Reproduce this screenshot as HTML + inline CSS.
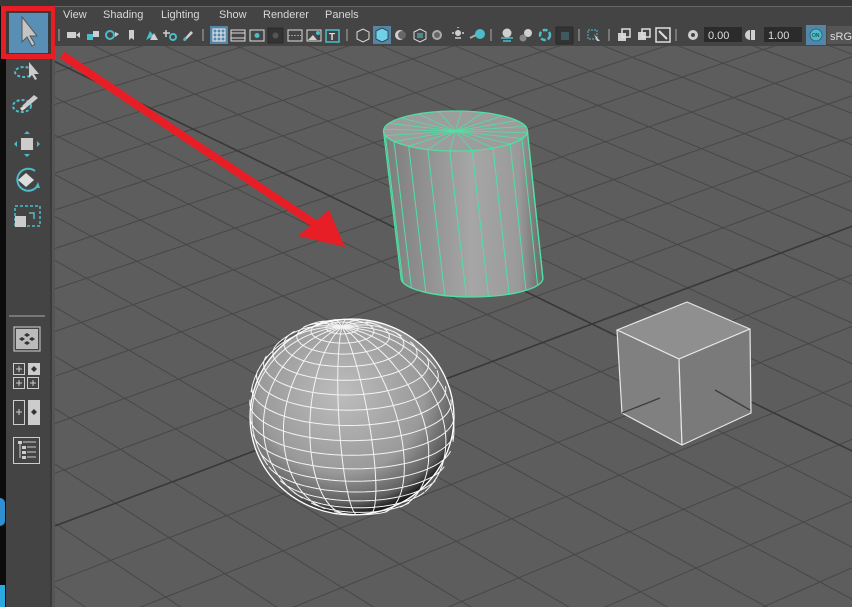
<!DOCTYPE html>
<html><head><meta charset="utf-8"><style>
*{margin:0;padding:0;box-sizing:border-box}
html{width:852px;height:607px;overflow:hidden}
body{width:852px;height:607px;overflow:hidden;background:#444;font-family:"Liberation Sans",sans-serif;position:relative}
.abs{position:absolute}
svg{display:block}
.menu span{position:absolute;top:9px;font-size:11px;color:#d8d8d8}
</style></head><body>
<div class="abs" style="left:0;top:0;width:6px;height:607px;background:#0c0c0c"></div>
<div class="abs" style="left:0;top:498px;width:5px;height:28px;background:#2f8fd0;border-radius:0 6px 6px 0"></div>
<div class="abs" style="left:0;top:585px;width:5px;height:22px;background:#2aa8e0"></div>
<div class="abs" style="left:6px;top:0;width:44px;height:607px;background:#444"></div>
<div class="abs" style="left:50px;top:0;width:2px;height:607px;background:#3a3a3a"></div>
<div class="abs" style="left:52px;top:18px;width:3px;height:589px;background:#555"></div>
<div class="abs" style="left:0;top:0;width:852px;height:6px;background:#393939"></div>
<div class="abs" style="left:55px;top:6px;width:797px;height:1px;background:#666"></div>
<div class="abs" style="left:55px;top:7px;width:797px;height:39px;background:#444"></div>

<div class="menu">
<span style="left:63px">View</span><span style="left:103px">Shading</span><span style="left:161px">Lighting</span><span style="left:219px">Show</span><span style="left:263px">Renderer</span><span style="left:325px">Panels</span>
</div>

<svg class="abs" style="left:0;top:0" width="852" height="46">
<g fill="#cfcfcf" stroke="none">
<rect x="58" y="29" width="2" height="12" fill="#777"/>
<rect x="67" y="32" width="9" height="6"/><path d="M76 35l4-3v6z"/>
<rect x="87" y="34" width="6" height="6" fill="#4bbcc8"/><rect x="93" y="31" width="6" height="6"/>
<circle cx="110" cy="35" r="4" fill="none" stroke="#4bbcc8" stroke-width="2"/><path d="M115 32l4 2-4 3z"/>
<path d="M129 30h5v10l-2.5-2-2.5 2z"/>
<path d="M146 40l4-9 4 5-8 4z" fill="#4bbcc8"/><path d="M150 40h8l-4-7z"/>
<circle cx="173" cy="37" r="3" fill="none" stroke="#4bbcc8" stroke-width="2"/><path d="M163 33h7M166 30v7" stroke="#cfcfcf" stroke-width="1.5"/>
<path d="M183 40l8-9 2 2-8 8z"/><circle cx="185" cy="39" r="1.5" fill="#4bbcc8"/>
<rect x="202" y="29" width="2" height="12" fill="#777"/>
<rect x="210" y="26" width="18" height="18" fill="#5586a8"/>
<rect x="213" y="29" width="12" height="12" fill="none" stroke="#eee" stroke-width="1"/><path d="M217 29v12M221 29v12M213 33h12M213 37h12" stroke="#eee" stroke-width="1"/>
<rect x="231" y="30" width="14" height="11" fill="none" stroke="#ddd"/><path d="M231 33h14M231 38h14" stroke="#ddd"/>
<rect x="250" y="30" width="14" height="11" fill="none" stroke="#ddd"/><circle cx="257" cy="35.5" r="2.5" fill="#4bbcc8"/>
<rect x="268" y="28" width="15" height="15" fill="#333" stroke="#2a2a2a"/><circle cx="275.5" cy="35.5" r="3" fill="#555"/>
<rect x="288" y="30" width="14" height="11" fill="none" stroke="#ddd"/><path d="M288 35.5h14" stroke="#4bbcc8" stroke-dasharray="2 1"/>
<rect x="307" y="30" width="14" height="11" fill="none" stroke="#ddd"/><path d="M308 40l5-5 4 5z"/><circle cx="318" cy="33" r="2" fill="#4bbcc8"/>
<rect x="326" y="30" width="13" height="12" fill="none" stroke="#4bbcc8" stroke-width="1.5"/><text x="329" y="40" font-size="10" font-weight="bold" fill="#ddd" font-family="Liberation Sans">T</text>
<rect x="346" y="29" width="2" height="12" fill="#777"/>
<path d="M357 32l6-3 6 3v7l-6 3-6-3z" fill="none" stroke="#ddd"/>
<rect x="373" y="26" width="18" height="18" fill="#5586a8"/><path d="M376 31l6-3 6 3v8l-6 3-6-3z" fill="#6fd0e8" stroke="#333" stroke-width=".8"/>
<circle cx="400" cy="35" r="5"/><circle cx="402" cy="35" r="4" fill="#666"/>
<path d="M414 32l6-3 6 3v7l-6 3-6-3z" fill="none" stroke="#ddd"/><path d="M417 33h6v5h-6z" fill="#4bbcc8" opacity=".6"/>
<circle cx="437" cy="35" r="5" fill="#aaa"/><circle cx="437" cy="35" r="3" fill="#666"/>
<circle cx="458" cy="33" r="3"/><path d="M452 33h2M462 33h2M458 28v-1M455 38h6" stroke="#cfcfcf" stroke-width="1.5"/>
<circle cx="480" cy="34" r="5" fill="#4bbcc8"/><path d="M470 38l6-3" stroke="#aaa" stroke-width="2"/>
<rect x="490" y="29" width="2" height="12" fill="#777"/>
<circle cx="507" cy="33" r="4.5"/><path d="M501 38h12M503 41h8" stroke="#4bbcc8" stroke-width="1.5"/>
<circle cx="528" cy="33" r="4"/><circle cx="523" cy="38" r="3.5" fill="#888"/>
<circle cx="545" cy="35" r="5" fill="none" stroke="#4bbcc8" stroke-width="2.5" stroke-dasharray="5 2"/>
<rect x="556" y="27" width="17" height="17" fill="#333" stroke="#2a2a2a"/><rect x="561" y="32" width="8" height="8" fill="#3f5a5f"/>
<rect x="578" y="29" width="2" height="12" fill="#777"/>
<rect x="588" y="30" width="9" height="9" fill="none" stroke="#4bbcc8" stroke-dasharray="2 1"/><path d="M594 34l6 7-3 0z"/>
<rect x="608" y="29" width="2" height="12" fill="#777"/>
<rect x="618" y="33" width="8" height="8"/><rect x="622" y="29" width="8" height="8" fill="none" stroke="#ddd" stroke-width="1.5"/>
<rect x="638" y="32" width="8" height="8"/><rect x="642" y="29" width="8" height="8" fill="none" stroke="#ddd" stroke-width="1.5"/>
<rect x="656" y="28" width="14" height="14" fill="none" stroke="#ddd" stroke-width="1.5"/><path d="M659 31l8 8" stroke="#ddd" stroke-width="2"/>
<rect x="675" y="29" width="2" height="12" fill="#777"/>
<circle cx="693" cy="35" r="5"/><circle cx="693" cy="35" r="2" fill="#444"/>
<rect x="704" y="27" width="38" height="15" fill="#2b2b2b"/>
<path d="M750 30a5 5 0 0 0 0 10z" /><rect x="751" y="30" width="4" height="10"/>
<rect x="764" y="27" width="38" height="15" fill="#2b2b2b"/>
<rect x="806" y="25" width="20" height="20" fill="#5586a8"/><circle cx="816" cy="35" r="6" fill="#4bbcc8" stroke="#2a6a80"/>
<rect x="827" y="26" width="25" height="18" fill="#555"/>
</g>
<text x="708" y="39" font-size="11" fill="#ddd" font-family="Liberation Sans">0.00</text>
<text x="768" y="39" font-size="11" fill="#ddd" font-family="Liberation Sans">1.00</text>
<text x="812" y="37" font-size="5" fill="#123" font-family="Liberation Sans">ON</text>
<text x="830" y="40" font-size="11" fill="#ddd" font-family="Liberation Sans">sRGB</text>
</svg>

<svg id="vp" class="abs" style="left:55px;top:46px" width="797" height="561" viewBox="55 46 797 561">
<defs>
<radialGradient id="sg" cx="0.45" cy="0.38" r="0.62">
<stop offset="0" stop-color="#bdbdbd"/><stop offset="0.65" stop-color="#9a9a9a"/><stop offset="0.9" stop-color="#606060"/><stop offset="1" stop-color="#1a1a1a"/>
</radialGradient>
<linearGradient id="cg" x1="0" x2="1" y1="0" y2="0">
<stop offset="0" stop-color="#7d7d7d"/><stop offset="0.55" stop-color="#a6a6a6"/><stop offset="0.85" stop-color="#9a9a9a"/><stop offset="1" stop-color="#6a6a6a"/>
</linearGradient>
</defs>
<rect x="55" y="46" width="797" height="561" fill="#5d5d5d"/>
<g id="grid"></g>
<g stroke="#e6e6e6" stroke-width="1.2" stroke-linejoin="round">
<polygon points="617,330 687,302 750,329 679,359" fill="#8f8f8f"/>
<polygon points="617,330 679,359 682,445 622,413" fill="#808080"/>
<polygon points="679,359 750,329 751,413 682,445" fill="#7a7a7a"/>
<path d="M622,413 L 660,398 M 715,390 L 750,410" stroke="#3e3e3e" stroke-width="1.3"/>
</g>
<g id="cyl"></g>
<g id="sph"></g>
<path d="M62,55 L318,226" stroke="#e81e26" stroke-width="8" stroke-linecap="butt"/>
<polygon points="345,247 298,236 329,210" fill="#e81e26"/>
</svg>

<svg class="abs" style="left:0;top:0" width="55" height="607">
<rect x="6" y="10" width="44" height="46" fill="#3a3a3a"/>
<rect x="9" y="13" width="39" height="40" fill="#5a8fb5"/>
<path d="M22 17v25l5-5 5 9 3-2-5-8h7z" fill="#c4c4c4" stroke="#555" stroke-width="1"/>
<rect x="3.5" y="8.5" width="50" height="48" fill="none" stroke="#e81e26" stroke-width="5"/>
<ellipse cx="24" cy="72" rx="9" ry="5" fill="none" stroke="#4bbcc8" stroke-width="2" stroke-dasharray="3 2"/>
<path d="M29 62v16l3-3 3 5 2-1-3-5h5z" fill="#ccc"/>
<ellipse cx="22" cy="106" rx="9" ry="6" fill="none" stroke="#4bbcc8" stroke-width="2" stroke-dasharray="3 2"/>
<path d="M22 106l12-11 4 3-12 10z" fill="#ccc"/><path d="M20 108l4-2 2 2-4 3z" fill="#ddd"/>
<rect x="21" y="138" width="12" height="12" fill="#ccc"/>
<path d="M27 131l3 3h-6zM27 157l3-3h-6zM14 144l3-3v6zM40 144l-3-3v6z" fill="#4bbcc8"/>
<path d="M35 171a11 11 0 1 0 3 14" fill="none" stroke="#4bbcc8" stroke-width="2"/>
<path d="M38 182l-3 6 5 0z" fill="#4bbcc8"/>
<path d="M26 173l8 7-8 7-8-7z" fill="#ddd"/>
<rect x="15" y="206" width="25" height="20" fill="none" stroke="#4bbcc8" stroke-width="1.5" stroke-dasharray="3 2"/>
<rect x="15" y="216" width="11" height="11" fill="#ccc"/>
<path d="M29 213h5v6" fill="none" stroke="#4bbcc8" stroke-width="1.5"/>
<rect x="9" y="315" width="36" height="2" fill="#777"/>
<rect x="14" y="327" width="26" height="24" fill="none" stroke="#bbb" stroke-width="1.2"/>
<rect x="16" y="329" width="22" height="20" fill="#bbb"/>
<path d="M27 333l3 2-3 2-3-2zM22 337l3 2-3 2-3-2zM32 337l3 2-3 2-3-2zM27 341l3 2-3 2-3-2z" fill="#333"/>
<g fill="none" stroke="#ccc" stroke-width="1">
<rect x="13.5" y="363.5" width="11" height="11"/><rect x="13.5" y="377.5" width="11" height="11"/><rect x="27.5" y="377.5" width="11" height="11"/>
<path d="M16 369h6M19 366v6M16 383h6M19 380v6M30 383h6M33 380v6"/>
<rect x="13.5" y="400.5" width="11" height="24"/>
<path d="M16 412h6M19 409v6"/>
<rect x="13.5" y="437.5" width="26" height="26"/>
</g>
<rect x="28" y="363" width="12" height="12" fill="#ccc"/><path d="M34 366l3 3-3 3-3-3z" fill="#333"/>
<rect x="28" y="400" width="12" height="25" fill="#ccc"/><path d="M34 409l3 3-3 3-3-3z" fill="#333"/>
<g fill="#ccc"><rect x="18" y="441" width="4" height="3"/><rect x="22" y="446" width="4" height="3"/><rect x="22" y="451" width="4" height="3"/><rect x="22" y="456" width="4" height="3"/></g>
<path d="M20 444v14M23 442h13M27 447h9M27 452h9M27 457h9" stroke="#ccc" stroke-width="1"/>
</svg>

<script>
(function(){
var NS="http://www.w3.org/2000/svg";
function el(p,tag,a){var e=document.createElementNS(NS,tag);for(var k in a)e.setAttribute(k,a[k]);p.appendChild(e);return e;}
function solve(A,b){var n=b.length;for(var i=0;i<n;i++){var m=i;for(var r=i+1;r<n;r++)if(Math.abs(A[r][i])>Math.abs(A[m][i]))m=r;var t=A[i];A[i]=A[m];A[m]=t;t=b[i];b[i]=b[m];b[m]=t;for(var r=0;r<n;r++){if(r==i)continue;var f=A[r][i]/A[i][i];for(var c=i;c<n;c++)A[r][c]-=f*A[i][c];b[r]-=f*b[i];}}return b.map(function(v,i){return v/A[i][i];});}
var src=[[0,0],[-5,0],[0,5],[-5,5]],dst=[[592,324],[330,196],[826,236],[555,120]];
var A=[],B=[];
for(var i=0;i<4;i++){var u=src[i][0],v=src[i][1],x=dst[i][0],y=dst[i][1];
A.push([u,v,1,0,0,0,-u*x,-v*x]);B.push(x);A.push([0,0,0,u,v,1,-u*y,-v*y]);B.push(y);}
var h=solve(A,B);
function P(u,v){var w=h[6]*u+h[7]*v+1;return [ (h[0]*u+h[1]*v+h[2])/w,(h[3]*u+h[4]*v+h[5])/w,w];}
var g=document.getElementById('grid');
var N=30;
function gl(fn,axis){var pts=[];for(var t=-N;t<=N;t+=0.5){var p=fn(t);if(p[2]>0.08)pts.push(p[0].toFixed(1)+","+p[1].toFixed(1));}
 if(pts.length>1)el(g,'polyline',{points:pts.join(' '),fill:'none',stroke:axis?'#383838':'#474747','stroke-width':axis?1.6:1});}
for(var k=-N;k<=N;k++){if(k==0)continue;(function(k){gl(function(t){return P(k,t);},false);gl(function(t){return P(t,k);},false);})(k);}
gl(function(t){return P(0,t);},true);gl(function(t){return P(t,0);},true);

var c=document.getElementById('cyl');
var T={x:455.5,y:131,rx:72,ry:20},Bt={x:472,y:278,rx:71,ry:19};
var d="M"+(T.x-T.rx)+","+T.y+" L"+(Bt.x-Bt.rx)+","+Bt.y+" A"+Bt.rx+","+Bt.ry+" 0 0 0 "+(Bt.x+Bt.rx)+","+Bt.y+" L"+(T.x+T.rx)+","+T.y+" Z";
el(c,'path',{d:d,fill:'url(#cg)'});
el(c,'ellipse',{cx:T.x,cy:T.y,rx:T.rx,ry:T.ry,fill:'#9d9d9d'});
var gr='#4fe0a4';
for(var i=0;i<20;i++){var a=i*Math.PI*2/20+0.08;var ca=Math.cos(a),sa=Math.sin(a);
 el(c,'line',{x1:T.x,y1:T.y,x2:T.x+T.rx*ca,y2:T.y+T.ry*sa,stroke:gr,'stroke-width':0.8});
 if(sa>0)el(c,'line',{x1:T.x+T.rx*ca,y1:T.y+T.ry*sa,x2:Bt.x+Bt.rx*ca,y2:Bt.y+Bt.ry*sa,stroke:gr,'stroke-width':1});}
el(c,'ellipse',{cx:T.x,cy:T.y,rx:T.rx,ry:T.ry,fill:'none',stroke:gr,'stroke-width':1.2});
el(c,'line',{x1:T.x-T.rx,y1:T.y,x2:Bt.x-Bt.rx,y2:Bt.y,stroke:gr,'stroke-width':1.2});
el(c,'line',{x1:T.x+T.rx,y1:T.y,x2:Bt.x+Bt.rx,y2:Bt.y,stroke:gr,'stroke-width':1.2});
el(c,'path',{d:"M"+(Bt.x-Bt.rx)+","+Bt.y+" A"+Bt.rx+","+Bt.ry+" 0 0 0 "+(Bt.x+Bt.rx)+","+Bt.y,fill:'none',stroke:gr,'stroke-width':1.3});

var s=document.getElementById('sph');
var cx=352,cy=417,R=102,sy=0.96,tl=23*Math.PI/180,ct=Math.cos(tl),st=Math.sin(tl);
el(s,'ellipse',{cx:cx,cy:cy,rx:R,ry:R*sy,fill:'url(#sg)'});
function SP(phi,th){var x=Math.cos(phi)*Math.cos(th),y=Math.sin(phi),z=Math.cos(phi)*Math.sin(th);
 var y2=y*ct-z*st, z2=y*st+z*ct; return [cx+R*x - 10*y, cy-R*sy*y2, z2];}
var segs=[];
function seg(a,b){if(a[2]>-0.02&&b[2]>-0.02)segs.push("M"+a[0].toFixed(1)+","+a[1].toFixed(1)+"L"+b[0].toFixed(1)+","+b[1].toFixed(1));}
for(var k=1;k<20;k++){var phi=-Math.PI/2+k*Math.PI/20;var prev=null;for(var j=0;j<=72;j++){var p=SP(phi,j*Math.PI*2/72);if(prev)seg(prev,p);prev=p;}}
for(var k=0;k<20;k++){var th=k*Math.PI*2/20+0.1;var prev=null;for(var j=0;j<=40;j++){var p=SP(-Math.PI/2+j*Math.PI/40,th);if(prev)seg(prev,p);prev=p;}}
el(s,'path',{d:segs.join(''),fill:'none',stroke:'#f4f4f4','stroke-width':1});
el(s,'ellipse',{cx:cx,cy:cy,rx:R,ry:R*sy,fill:'none',stroke:'#fff','stroke-width':1.3});
})();
</script>
</body></html>
